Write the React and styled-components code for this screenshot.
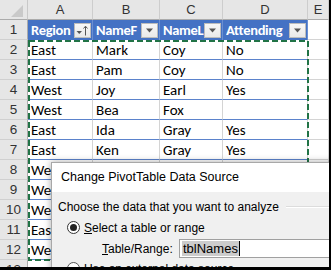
import React from "react";
import styled, { createGlobalStyle } from "styled-components";

const GlobalStyle = createGlobalStyle`
  html, body { margin: 0; padding: 0; background: #000; }
  * { box-sizing: border-box; }
`;

const COLS = "28px 65px 67px 63px 85px 21px";
const CELL_FONT = `Calibri, Carlito, Lato, "Liberation Sans", sans-serif`;
const UI_FONT = `"Segoe UI", "Liberation Sans", Arial, sans-serif`;

const Frame = styled.div`
  width: 331px;
  height: 270px;
  background: #000;
  padding: 0 2px 3px 0;
`;

const Sheet = styled.div`
  position: relative;
  width: 329px;
  height: 267px;
  overflow: hidden;
  background: #fff;
  display: flex;
  flex-direction: column;
`;

const Row = styled.div`
  display: grid;
  grid-template-columns: ${COLS};
  height: 20px;
  flex: 0 0 20px;
`;

const Corner = styled.div`
  background: #e6e6e6;
  border-right: 1px solid #c8c8c8;
  border-bottom: 1px solid #ababab;
  display: flex;
  align-items: flex-end;
  justify-content: flex-end;
  padding: 0 4px 2px 0;
`;

const CornerTriangle = styled.div`
  width: 0;
  height: 0;
  border-left: 12px solid transparent;
  border-bottom: 12px solid #c9c9c9;
`;

const ColHead = styled.div`
  background: #e6e6e6;
  border-right: 1px solid #cdcdcd;
  border-bottom: 1px solid #ababab;
  font-family: ${UI_FONT};
  font-size: 13px;
  color: #333;
  display: flex;
  align-items: center;
  justify-content: center;
`;

const RowNum = styled.div`
  background: #e6e6e6;
  border-right: 1px solid #ababab;
  border-bottom: 1px solid #d0d0d0;
  font-family: ${UI_FONT};
  font-size: 13.5px;
  color: #333;
  display: flex;
  align-items: center;
  justify-content: center;
`;

const Cell = styled.div`
  font-family: ${CELL_FONT};
  font-size: 15px;
  color: #000;
  white-space: nowrap;
  overflow: hidden;
  padding-left: 3px;
  display: flex;
  align-items: center;
  border-right: 1px solid #d4d4d4;
  border-bottom: 1px solid ${(p) => (p.$inTable ? "#5b83cc" : "#d4d4d4")};
  background: #fff;
`;

const HeadCell = styled.div`
  font-family: ${CELL_FONT};
  font-size: 14.5px;
  letter-spacing: -0.3px;
  font-weight: 700;
  color: #fff;
  white-space: nowrap;
  overflow: hidden;
  padding-left: 3px;
  padding-right: 1px;
  display: flex;
  align-items: center;
  background: #4472c4;
  border-right: 1px solid #6a8fd2;
`;

const HeadText = styled.span`
  flex: 1;
  overflow: hidden;
`;

const FilterBtn = styled.div`
  width: 17px;
  height: 15px;
  flex: 0 0 17px;
  background: linear-gradient(#f7f7f7, #e9e9e9);
  border: 1px solid #bcbcbc;
  display: flex;
  align-items: center;
  justify-content: center;
`;

const Ants = styled.svg`
  position: absolute;
  left: 28px;
  top: 40px;
  pointer-events: none;
`;

const Dialog = styled.div`
  position: absolute;
  left: 51px;
  top: 162px;
  width: 300px;
  height: 130px;
  background: #f0f0f0;
  border: 1px solid #a8a8a8;
  box-shadow: 0 0 7px rgba(0, 0, 0, 0.35);
  font-family: ${UI_FONT};
  font-size: 12px;
  color: #000;
  display: flex;
  flex-direction: column;
`;

const TitleBar = styled.div`
  height: 29px;
  background: #fff;
  padding: 0 0 2px 9px;
  display: flex;
  align-items: center;
  font-size: 12.5px;
`;

const Body = styled.div`
  padding: 7px 0 0 6px;
  display: flex;
  flex-direction: column;
`;

const GroupHead = styled.div`
  display: flex;
  align-items: center;
  gap: 7px;
  height: 16px;
`;

const GroupLine = styled.div`
  flex: 1;
  border-top: 1px solid #dcdcdc;
  border-bottom: 1px solid #fff;
`;

const RadioRow = styled.div`
  display: flex;
  align-items: center;
  gap: 4px;
  height: 13px;
  margin-top: ${(p) => p.$mt}px;
  padding-left: 9px;
`;

const Radio = styled.span`
  width: 13px;
  height: 13px;
  flex: 0 0 13px;
  border-radius: 50%;
  border: 1px solid ${(p) => (p.$on ? "#333" : "#555")};
  background: #fff;
  display: flex;
  align-items: center;
  justify-content: center;
  &::after {
    content: "";
    width: 7px;
    height: 7px;
    border-radius: 50%;
    background: #222;
    display: ${(p) => (p.$on ? "block" : "none")};
  }
`;

const U = styled.u`
  text-decoration: underline;
`;

const FieldRow = styled.div`
  display: flex;
  align-items: center;
  margin-top: 5px;
  height: 19px;
  padding-left: 44px;
`;

const FieldLabel = styled.span`
  width: 77px;
  flex: 0 0 77px;
`;

const Input = styled.div`
  flex: 1;
  height: 19px;
  background: #fff;
  border: 1px solid #a0a0a0;
  padding-left: 2px;
  display: flex;
  align-items: center;
  font-size: 13px;
`;

const Selected = styled.span`
  background: #cccccc;
  color: #000;
  padding: 0 1px;
  line-height: 15px;
  border-right: 1px solid #000;
`;

const DownArrow = () => (
  <svg width="9" height="5" viewBox="0 0 9 5">
    <path d="M1 0.5 L8 0.5 L4.5 4.5 Z" fill="#555" />
  </svg>
);

const SortArrow = () => (
  <svg width="13" height="11" viewBox="0 0 13 11">
    <path d="M0.5 6 L6 6 L3.25 9 Z" fill="#555" />
    <path d="M9.5 10.5 L9.5 1.5" stroke="#555" strokeWidth="1" />
    <path d="M7.5 3.5 L9.5 1.2 L11.5 3.5" stroke="#555" strokeWidth="1" fill="none" />
  </svg>
);

const headers = ["Region", "NameF", "NameL", "Attending"];
const data = [
  ["East", "Mark", "Coy", "No"],
  ["East", "Pam", "Coy", "No"],
  ["West", "Joy", "Earl", "Yes"],
  ["West", "Bea", "Fox", ""],
  ["East", "Ida", "Gray", "Yes"],
  ["East", "Ken", "Gray", "Yes"],
  ["West", "", "", ""],
  ["West", "", "", ""],
  ["West", "", "", ""],
  ["East", "", "", ""],
  ["West", "", "", ""],
];

export default function App() {
  return (
    <>
      <GlobalStyle />
      <Frame>
        <Sheet>
          <Row>
            <Corner>
              <CornerTriangle />
            </Corner>
            {["A", "B", "C", "D", "E"].map((c) => (
              <ColHead key={c}>{c}</ColHead>
            ))}
          </Row>
          <Row>
            <RowNum>1</RowNum>
            {headers.map((h, i) => (
              <HeadCell key={h}>
                <HeadText>{h}</HeadText>
                <FilterBtn>{i === 0 ? <SortArrow /> : <DownArrow />}</FilterBtn>
              </HeadCell>
            ))}
            <Cell />
          </Row>
          {data.map((r, ri) => (
            <Row key={ri}>
              <RowNum>{ri + 2}</RowNum>
              {r.map((v, ci) => (
                <Cell key={ci} $inTable>
                  {v}
                </Cell>
              ))}
              <Cell />
            </Row>
          ))}
          <Row>
            <RowNum>13</RowNum>
            <Cell />
            <Cell />
            <Cell />
            <Cell />
            <Cell />
          </Row>
          <Ants width="282" height="222">
            <rect
              x="1"
              y="1"
              width="279"
              height="219"
              fill="none"
              stroke="#217346"
              strokeWidth="2"
              strokeDasharray="6 3"
            />
          </Ants>
          <Dialog>
            <TitleBar>Change PivotTable Data Source</TitleBar>
            <Body>
              <GroupHead>
                <span>Choose the data that you want to analyze</span>
                <GroupLine />
              </GroupHead>
              <RadioRow $mt={6}>
                <Radio $on />
                <span>
                  <U>S</U>elect a table or range
                </span>
              </RadioRow>
              <FieldRow>
                <FieldLabel>
                  <U>T</U>able/Range:
                </FieldLabel>
                <Input>
                  <Selected>tblNames</Selected>
                </Input>
              </FieldRow>
              <RadioRow $mt={4}>
                <Radio />
                <span>
                  <U>U</U>se an external data source
                </span>
              </RadioRow>
            </Body>
          </Dialog>
        </Sheet>
      </Frame>
    </>
  );
}
